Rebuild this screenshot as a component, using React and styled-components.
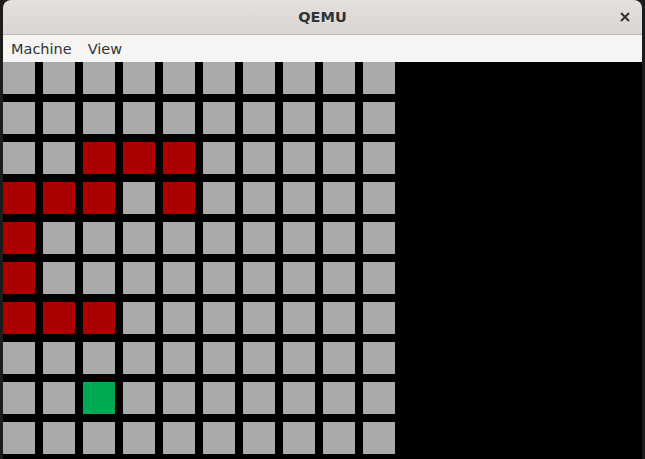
import styled, { createGlobalStyle } from 'styled-components';

const GlobalStyle = createGlobalStyle`
  html, body {
    margin: 0;
    padding: 0;
    background: #1c1c1c;
    overflow: hidden;
  }
`;

const Desktop = styled.div`
  width: 645px;
  height: 459px;
  padding: 0 3px 0 3px;
  box-sizing: border-box;
  overflow: hidden;
`;

const Window = styled.div`
  display: flex;
  flex-direction: column;
  height: 100%;
  border-radius: 8px 8px 0 0;
  overflow: hidden;
  background: #000;
`;

const TitleBar = styled.header`
  position: relative;
  display: flex;
  align-items: center;
  justify-content: center;
  height: 35px;
  flex-shrink: 0;
  padding-bottom: 1px;
  box-sizing: border-box;
  background: linear-gradient(#e3e0dd, #dad6d2);
  border-bottom: 1px solid #bdb8b3;
  font-family: 'DejaVu Sans', sans-serif;
  font-weight: bold;
  font-size: 14.5px;
  color: #2e3436;
`;

const CloseButton = styled.div`
  position: absolute;
  right: 12px;
  top: 12px;
  width: 10px;
  height: 10px;
  display: flex;
`;

const MenuBar = styled.nav`
  display: flex;
  align-items: center;
  gap: 16px;
  height: 27px;
  flex-shrink: 0;
  padding: 0 8px;
  background: #f6f5f4;
  font-family: 'DejaVu Sans', sans-serif;
  font-size: 14.5px;
  color: #2e3436;
`;

const Screen = styled.div`
  flex: 1;
  overflow: hidden;
  background: #000;
`;

const Board = styled.div`
  display: grid;
  grid-template-columns: repeat(10, 32px);
  grid-auto-rows: 32px;
  gap: 8px;
`;

const Cell = styled.div`
  background: ${({ $kind }) =>
    $kind === 'r' ? '#aa0000' : $kind === 'g' ? '#00aa55' : '#aaaaaa'};
`;

const rows = [
  '..........',
  '..........',
  '..rrr.....',
  'rrr.r.....',
  'r.........',
  'r.........',
  'rrr.......',
  '..........',
  '..g.......',
  '..........',
];

const App = () => {
  return (
    <Desktop>
      <GlobalStyle />
      <Window>
        <TitleBar>
          QEMU
          <CloseButton>
            <svg width="10" height="10" viewBox="0 0 10 10">
              <path d="M1 1L9 9M9 1L1 9" stroke="#2e3436" strokeWidth="2" />
            </svg>
          </CloseButton>
        </TitleBar>
        <MenuBar>
          <span>Machine</span>
          <span>View</span>
        </MenuBar>
        <Screen>
          <Board>
            {rows.map((row, y) =>
              row.split('').map((c, x) => <Cell key={`${y}-${x}`} $kind={c} />)
            )}
          </Board>
        </Screen>
      </Window>
    </Desktop>
  );
};

export default App;
